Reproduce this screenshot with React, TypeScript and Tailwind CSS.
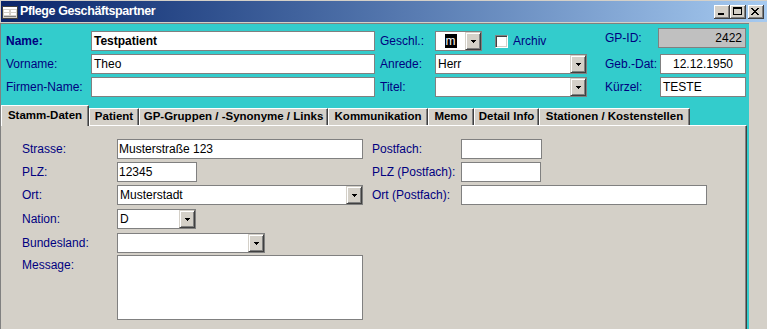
import React from 'react';

const DropArrow = () => (
  <svg width="5" height="3" shapeRendering="crispEdges">
    <path d="M0 0h5v1h-1v1h-1v1h-1v-1h-1v-1h-1z" fill="#000" />
  </svg>
);

const DropBtn = () => (
  <div className="w-[16px] h-full shrink-0 bg-[#d4d0c8] border-t border-l border-t-[#d4d0c8] border-l-[#d4d0c8] border-r border-b border-r-[#404040] border-b-[#404040] shadow-[inset_1px_1px_0_#fff,inset_-1px_-1px_0_#808080] flex items-center justify-center">
    <DropArrow />
  </div>
);

const Field = ({ className = '', children }: { className?: string; children?: React.ReactNode }) => (
  <div className={`h-[20px] border border-[#808080] flex items-center text-[12px] text-black whitespace-nowrap ${className}`}>
    {children}
  </div>
);

const Combo = ({ className = '', children }: { className?: string; children?: React.ReactNode }) => (
  <div className={`h-[20px] border border-[#808080] bg-white flex text-[12px] text-black ${className}`}>
    <div className="flex-1 flex items-center pl-[2px] whitespace-nowrap">{children}</div>
    <DropBtn />
  </div>
);

const Label = ({ className = '', children }: { className?: string; children: React.ReactNode }) => (
  <div className={`text-[12px] text-[#000080] whitespace-nowrap shrink-0 ${className}`}>{children}</div>
);

const WinBtn = ({ children, className = '' }: { children: React.ReactNode; className?: string }) => (
  <div className={`w-[16px] h-[14px] bg-[#d4d0c8] border-r border-b border-r-[#404040] border-b-[#404040] shadow-[inset_1px_1px_0_#fff,inset_-1px_-1px_0_#808080] flex items-center justify-center ${className}`}>
    {children}
  </div>
);

const tabs = [
  { label: 'Stamm-Daten', w: 'w-[88px]', active: true },
  { label: 'Patient', w: 'w-[50px]' },
  { label: 'GP-Gruppen / -Synonyme / Links', w: 'w-[189px]' },
  { label: 'Kommunikation', w: 'w-[100px]' },
  { label: 'Memo', w: 'w-[46px]' },
  { label: 'Detail Info', w: 'w-[65px]' },
  { label: 'Stationen / Kostenstellen', w: 'w-[151px]' },
];

export default function App() {
  return (
    <div className="w-[767px] h-[329px] overflow-hidden bg-[#d4d0c8] font-['Liberation_Sans',Arial,sans-serif] flex flex-col">
      {/* title bar */}
      <div className="h-[22px] shrink-0 border-t border-l border-[#d4d0c8] bg-linear-to-r from-[#0a246a] to-[#a6caf0] flex items-center pl-[1px] pr-[3px]">
        <svg width="16" height="13" viewBox="0 0 16 13" shapeRendering="crispEdges" className="mt-[1px]">
          <rect x="0.5" y="0.5" width="15" height="12" fill="#d4d0c8" stroke="#404040" />
          <rect x="1" y="1" width="14" height="2" fill="#fff" />
          <rect x="2" y="4" width="5" height="2" fill="#fff" />
          <rect x="9" y="4" width="5" height="2" fill="#fff" />
          <rect x="2" y="7" width="5" height="2" fill="#fff" />
          <rect x="9" y="7" width="5" height="2" fill="#fff" />
          <rect x="2" y="10" width="12" height="1" fill="#808080" />
        </svg>
        <div className="ml-[2px] text-white font-bold text-[12.5px] tracking-[-0.4px]">Pflege Geschäftspartner</div>
        <div className="ml-auto flex items-center">
          <WinBtn>
            <div className="w-[6px] h-[2px] bg-black mt-[5px] -ml-[1px]" />
          </WinBtn>
          <WinBtn>
            <div className="w-[9px] h-[8px] border border-black border-t-2 -ml-[1px]" />
          </WinBtn>
          <WinBtn className="ml-[2px]">
            <svg width="8" height="7" shapeRendering="crispEdges" className="-ml-[1px]">
              <path d="M0 0h2v1h1v1h2v-1h1v-1h2v1h-1v1h-1v1h-1v1h1v1h1v1h1v1h-2v-1h-1v-1h-2v1h-1v1h-2v-1h1v-1h1v-1h1v-1h-1v-1h-1v-1h-1z" fill="#000" />
            </svg>
          </WinBtn>
        </div>
      </div>
      <div className="h-[1px] shrink-0 bg-[#d4d0c8]" />

      <div className="flex flex-1 min-h-0">
        <div className="w-[749px] shrink-0 border-t border-l border-[#808080] bg-[#33cccc] flex flex-col">
          {/* header */}
          <div className="pt-[7px] pl-[5px] flex flex-col gap-[3px]">
            <div className="flex items-center h-[20px]">
              <div className="w-[374px] flex items-center">
                <Label className="w-[85px] font-bold">Name:</Label>
                <Field className="w-[284px] bg-white pl-[2px] font-bold">Testpatient</Field>
              </div>
              <div className="w-[225px] flex items-center">
                <Label className="w-[55px]">Geschl.:</Label>
                <div className="w-[47px] h-[20px] border border-[#808080] bg-white flex text-[12px]">
                  <div className="flex-1 flex items-center justify-center">
                    <span className="bg-black text-white px-[1px] leading-[14px]">m</span>
                  </div>
                  <DropBtn />
                </div>
                <div className="ml-[13px] w-[13px] h-[13px] bg-white border-t border-l border-t-[#808080] border-l-[#808080] border-r border-b border-r-white border-b-white shadow-[inset_1px_1px_0_#404040,inset_-1px_-1px_0_#d4d0c8]" />
                <Label className="ml-[5px]">Archiv</Label>
              </div>
              <div className="flex items-center self-start -mt-[3px] h-[20px]">
                <Label className="w-[53px]">GP-ID:</Label>
                <Field className="w-[88px] bg-[#c0c0c0] justify-end pr-[3px]">2422</Field>
              </div>
            </div>
            <div className="flex items-center h-[20px]">
              <div className="w-[374px] flex items-center">
                <Label className="w-[85px]">Vorname:</Label>
                <Field className="w-[284px] bg-white pl-[2px]">Theo</Field>
              </div>
              <div className="w-[225px] flex items-center">
                <Label className="w-[55px]">Anrede:</Label>
                <Combo className="w-[152px]">Herr</Combo>
              </div>
              <div className="flex items-center">
                <Label className="w-[55px]">Geb.-Dat:</Label>
                <Field className="w-[86px] bg-white justify-center">12.12.1950</Field>
              </div>
            </div>
            <div className="flex items-center h-[20px]">
              <div className="w-[374px] flex items-center">
                <Label className="w-[85px]">Firmen-Name:</Label>
                <Field className="w-[284px] bg-white" />
              </div>
              <div className="w-[225px] flex items-center">
                <Label className="w-[55px]">Titel:</Label>
                <Combo className="w-[152px]" />
              </div>
              <div className="flex items-center">
                <Label className="w-[55px]">Kürzel:</Label>
                <Field className="w-[86px] bg-white pl-[2px]">TESTE</Field>
              </div>
            </div>
          </div>

          {/* tabs */}
          <div className="mt-[8px] h-[20px] flex items-end shrink-0">
            {tabs.map((t) =>
              t.active ? (
                <div
                  key={t.label}
                  className={`${t.w} h-[21px] -mb-[1px] relative z-10 bg-[#d4d0c8] border-t border-l border-t-white border-l-white border-r border-r-[#404040] shadow-[inset_-1px_0_0_#808080] flex items-center justify-center pb-[1px] text-[11.5px] font-bold text-black whitespace-nowrap`}
                >
                  {t.label}
                </div>
              ) : (
                <div
                  key={t.label}
                  className={`${t.w} h-[17px] bg-[#d4d0c8] border-t border-l border-t-white border-l-white border-r border-r-[#404040] shadow-[inset_-1px_0_0_#808080] flex items-center justify-center text-[11.5px] font-bold text-black whitespace-nowrap`}
                >
                  {t.label}
                </div>
              )
            )}
          </div>

          {/* tab pane */}
          <div className="w-[746px] flex-1 bg-[#d4d0c8] border-t border-t-white border-r border-r-[#404040] shadow-[inset_-1px_0_0_#808080] pt-[13px] pl-[21px] flex">
            <div className="w-[341px] flex flex-col gap-[3px]">
              <div className="flex items-center h-[20px]">
                <Label className="w-[95px]">Strasse:</Label>
                <Field className="w-[246px] bg-white pl-[1px]">Musterstraße 123</Field>
              </div>
              <div className="flex items-center h-[20px]">
                <Label className="w-[95px]">PLZ:</Label>
                <Field className="w-[80px] bg-white pl-[1px]">12345</Field>
              </div>
              <div className="flex items-center h-[20px]">
                <Label className="w-[95px]">Ort:</Label>
                <Combo className="w-[246px]">Musterstadt</Combo>
              </div>
              <div className="flex items-center h-[20px] mt-[1px]">
                <Label className="w-[95px]">Nation:</Label>
                <Combo className="w-[79px]">D</Combo>
              </div>
              <div className="flex items-center h-[20px] mt-[1px]">
                <Label className="w-[95px]">Bundesland:</Label>
                <Combo className="w-[148px]" />
              </div>
              <div className="flex items-start -mt-[1px]">
                <Label className="w-[95px] leading-[18px] mt-[1px]">Message:</Label>
                <div className="w-[246px] h-[65px] border border-[#808080] bg-white" />
              </div>
            </div>
            <div className="ml-[9px] flex flex-col gap-[3px]">
              <div className="flex items-center h-[20px]">
                <Label className="w-[89px]">Postfach:</Label>
                <Field className="w-[81px] bg-white" />
              </div>
              <div className="flex items-center h-[20px]">
                <Label className="w-[89px]">PLZ (Postfach):</Label>
                <Field className="w-[80px] bg-white" />
              </div>
              <div className="flex items-center h-[20px]">
                <Label className="w-[89px]">Ort (Postfach):</Label>
                <Field className="w-[246px] bg-white" />
              </div>
            </div>
          </div>
        </div>
        <div className="flex-1 bg-[#d4d0c8]" />
      </div>
    </div>
  );
}
